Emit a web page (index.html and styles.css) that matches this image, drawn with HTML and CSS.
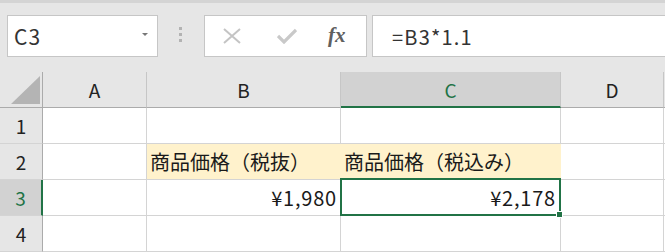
FILE: index.html
```html
<!DOCTYPE html>
<html lang="ja">
<head>
    <meta charset="UTF-8">
    <title>Sheet</title>
    <link rel="stylesheet" href="styles.css">
</head>
<body>
    <div class="toolbar">
        <div class="namebox">
            <span>C3</span>
            <span class="caret"></span>
        </div>
        <div class="grip"><i></i><i></i><i></i></div>
        <div class="fbuttons">
            <svg class="icon-x" width="18" height="16" viewBox="0 0 18 16">
                <path d="M1 1L17 15M17 1L1 15" stroke="#c4c4c4" stroke-width="2" fill="none"/>
            </svg>
            <svg class="icon-check" width="20" height="16" viewBox="0 0 20 16">
                <path d="M1 8L7 14L19 2" stroke="#c9c9c9" stroke-width="3.2" fill="none"/>
            </svg>
            <span class="fx">fx</span>
        </div>
        <div class="finput">=B3*1.1</div>
    </div>

    <div class="sheet">
        <!-- header row -->
        <div class="cell corner"><span class="tri"></span></div>
        <div class="cell hd">A</div>
        <div class="cell hd">B</div>
        <div class="cell hd sel-col">C</div>
        <div class="cell hd">D</div>
        <div class="cell hd rest"></div>

        <!-- row 1 -->
        <div class="cell rh">1</div>
        <div class="cell"></div>
        <div class="cell"></div>
        <div class="cell"></div>
        <div class="cell"></div>
        <div class="cell rest"></div>

        <!-- row 2 -->
        <div class="cell rh">2</div>
        <div class="cell"></div>
        <div class="cell fill">商品価格（税抜）</div>
        <div class="cell fill">商品価格（税込み）</div>
        <div class="cell"></div>
        <div class="cell rest"></div>

        <!-- row 3 -->
        <div class="cell rh sel-row">3</div>
        <div class="cell"></div>
        <div class="cell num">¥1,980</div>
        <div class="cell num active">¥2,178<span class="handle"></span></div>
        <div class="cell"></div>
        <div class="cell rest"></div>

        <!-- row 4 -->
        <div class="cell rh">4</div>
        <div class="cell"></div>
        <div class="cell"></div>
        <div class="cell"></div>
        <div class="cell"></div>
        <div class="cell rest"></div>
    </div>
</body>
</html>
```

FILE: styles.css
```css
body {
    margin: 0;
    background: #e6e6e6;
    font-family: "Noto Sans CJK JP", "Noto Sans", sans-serif;
    color: #1a1a1a;
    overflow: hidden;
}

/* formula bar */
.toolbar {
    display: flex;
    height: 42px;
    padding: 12px 0 15px 7px;
    border-top: 3px solid #d4d4d4;
}

.namebox {
    width: 151px;
    box-sizing: border-box;
    background: #fff;
    border: 1px solid #c6c6c6;
    display: flex;
    align-items: center;
    justify-content: space-between;
    padding: 0 9px 0 6px;
    font-size: 21px;
    color: #333;
    letter-spacing: 1px;
}

.caret {
    width: 0;
    height: 0;
    border-left: 3px solid transparent;
    border-right: 3px solid transparent;
    border-top: 3px solid #777;
    margin-top: -4px;
}

.grip {
    margin: 0 22px 0 21px;
    width: 3px;
    display: flex;
    flex-direction: column;
    justify-content: center;
    gap: 3px;
    padding-bottom: 3px;
}

.grip i {
    display: block;
    width: 3px;
    height: 3px;
    background: #b3b3b3;
}

.fbuttons {
    width: 163px;
    box-sizing: border-box;
    background: #fff;
    border: 1px solid #c6c6c6;
    display: flex;
    align-items: center;
    padding-left: 18px;
}

.icon-check {
    margin-left: 36px;
}

.fx {
    margin-left: 31px;
    font-family: "Liberation Serif", serif;
    font-style: italic;
    font-weight: bold;
    font-size: 21px;
    color: #606060;
    margin-top: -2px;
}

.finput {
    flex: 1;
    margin-left: 5px;
    background: #fff;
    border: 1px solid #c6c6c6;
    border-right: none;
    display: flex;
    align-items: center;
    padding-left: 19px;
    font-size: 20px;
    color: #333;
    letter-spacing: 1.2px;
}

/* sheet grid */
.sheet {
    display: grid;
    grid-template-columns: 43px 104px 194px 220px 103px 1fr;
    grid-auto-rows: 36px;
    background: #fff;
}

.cell {
    box-sizing: border-box;
    border-right: 1px solid #d4d4d4;
    border-bottom: 1px solid #d4d4d4;
    display: flex;
    align-items: center;
    padding: 0 5px;
    font-size: 20px;
    white-space: nowrap;
}

.rest {
    border-right: none;
}

.hd {
    background: #e6e6e6;
    justify-content: center;
    font-size: 19px;
    color: #222;
    border-right-color: #c6c6c6;
    border-bottom-color: #ababab;
}

.hd.rest {
    background: #e6e6e6;
}

.corner {
    background: #e6e6e6;
    border-right-color: #ababab;
    border-bottom-color: #ababab;
    padding: 4px 2px 3px 11px;
    align-items: stretch;
}

.tri {
    flex: 1;
    background: #b4b4b4;
    clip-path: polygon(100% 0, 100% 100%, 0 100%);
}

.rh {
    background: #e6e6e6;
    justify-content: center;
    font-size: 19px;
    color: #222;
    border-right-color: #ababab;
    border-bottom-color: #d4d4d4;
}

.sel-col {
    background: #d2d2d2;
    color: #217346;
    border-bottom: 2px solid #217346;
}

.sel-row {
    background: #d2d2d2;
    color: #217346;
    border-right: 2px solid #217346;
}

.fill {
    background: #fff2cc;
    border-right-color: #fff2cc;
    padding-left: 3px;
}

.num {
    justify-content: flex-end;
    padding-right: 3px;
    letter-spacing: 0.8px;
}

.active {
    position: relative;
    padding-right: 4px;
}

.active::after {
    content: "";
    position: absolute;
    top: -2px;
    left: -1px;
    right: -1px;
    bottom: -1px;
    border: 2px solid #217346;
}

.handle {
    position: absolute;
    right: -3px;
    bottom: -3px;
    width: 5px;
    height: 5px;
    background: #217346;
    border: 1px solid #fff;
    z-index: 1;
}
```
